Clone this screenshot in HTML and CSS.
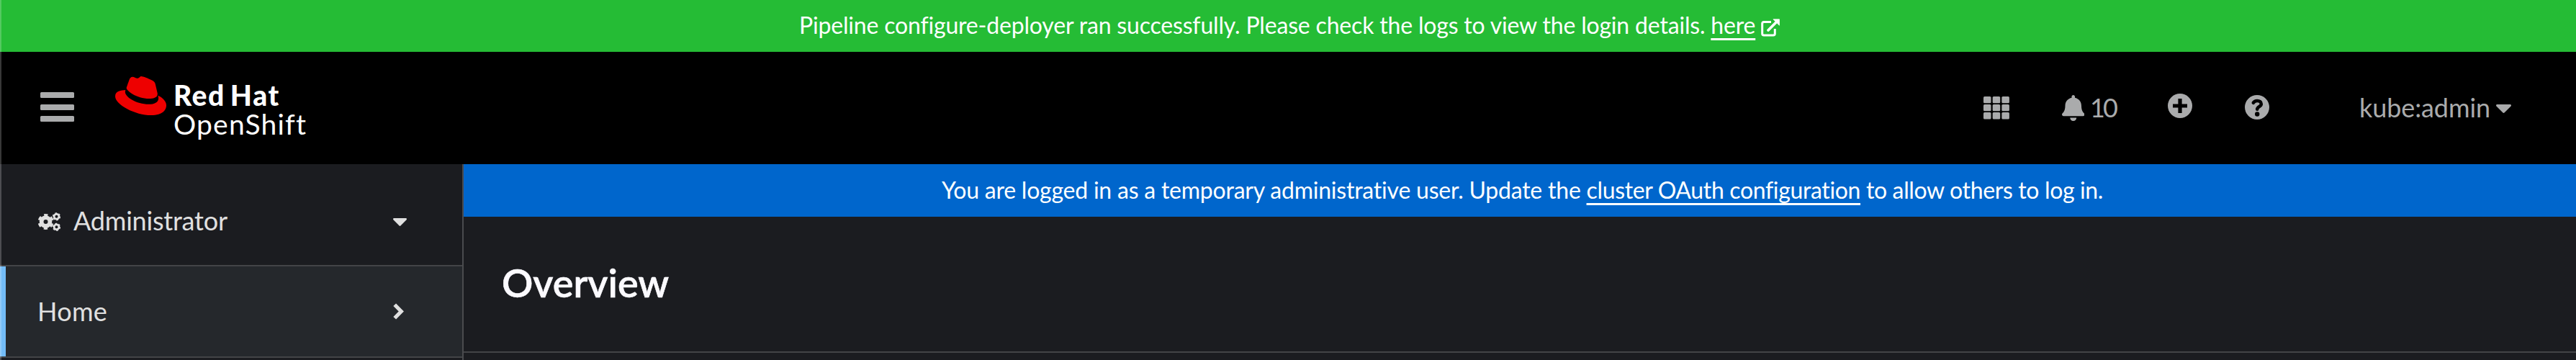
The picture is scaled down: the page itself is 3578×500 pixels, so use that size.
FILE: index.html
```html
<!DOCTYPE html>
<html lang="en">
<head>
<meta charset="utf-8">
<title>Overview · Red Hat OpenShift</title>
<link rel="stylesheet" href="styles.css">
</head>
<body>
<div class="app">
  <div class="notice notice-success">
    <span class="notice-text green-text">Pipeline configure-deployer ran successfully. Please check the logs to view the login details. <a class="link">here</a></span>
    <svg class="external" viewBox="0 0 26 25" fill="none" stroke="#fff"><path d="M14 4.500H4A2.300 2.300 0 0 0 1.700 6.800V20.700A2.300 2.300 0 0 0 4 23H17a2.300 2.300 0 0 0 2.300-2.300V14" stroke-width="3"/><path d="M10 16L20.500 5.500" stroke-width="3.800" stroke-linecap="round"/><path d="M17 .8H25.500v8.500Z" fill="#fff" stroke="#fff" stroke-width=".8" stroke-linejoin="round"/></svg>
  </div>
  <header class="masthead">
    <div class="burger"><i></i><i></i><i></i></div>
    <svg class="hat" viewBox="0 2.920 24 18.160" preserveAspectRatio="none"><path fill="#e00" d="M16.009 13.386c1.577 0 3.86-.326 3.86-2.202a1.765 1.765 0 0 0-.04-.431l-.94-4.08c-.216-.898-.406-1.305-1.982-2.093-1.223-.625-3.888-1.658-4.676-1.658-.733 0-.947.946-1.822.946-.842 0-1.467-.706-2.255-.706-.757 0-1.25.515-1.63 1.576 0 0-1.06 2.99-1.197 3.424a.81.81 0 0 0-.028.245c0 1.162 4.577 4.974 10.71 4.974m4.101-1.435c.218 1.032.218 1.14.218 1.277 0 1.765-1.984 2.745-4.593 2.745-5.895.004-11.06-3.451-11.06-5.734a2.326 2.326 0 0 1 .19-.925C2.746 9.415 0 9.794 0 12.217c0 3.969 9.405 8.861 16.851 8.861 5.71 0 7.149-2.582 7.149-4.62 0-1.605-1.387-3.425-3.887-4.512"/></svg>
    <div class="brand"><span class="brand-top">Red Hat</span><span class="brand-bottom">OpenShift</span></div>
    <div class="tools">
      <svg class="grid" viewBox="0 0 36 31.500" fill="#aaabac"><rect width="10.500" height="9.300" rx="1.500"/><rect x="12.700" width="10.500" height="9.300" rx="1.500"/><rect x="25.400" width="10.500" height="9.300" rx="1.500"/><rect y="11" width="10.500" height="9.300" rx="1.500"/><rect x="12.700" y="11" width="10.500" height="9.300" rx="1.500"/><rect x="25.400" y="11" width="10.500" height="9.300" rx="1.500"/><rect y="22.100" width="10.500" height="9.300" rx="1.500"/><rect x="12.700" y="22.100" width="10.500" height="9.300" rx="1.500"/><rect x="25.400" y="22.100" width="10.500" height="9.300" rx="1.500"/></svg>
      <svg class="bell" viewBox="0 0 448 512" fill="#aaabac"><path d="M224 512c35.32 0 63.97-28.65 63.97-64H160.03c0 35.35 28.65 64 63.97 64zm215.39-149.71c-19.32-20.76-55.47-51.99-55.47-154.29 0-77.7-54.48-139.9-127.94-155.16V32c0-17.67-14.32-32-31.98-32s-31.98 14.33-31.98 32v20.84C118.56 68.1 64.08 130.3 64.08 208c0 102.3-36.15 133.53-55.47 154.29-6 6.45-8.66 14.16-8.61 21.71.11 16.4 12.98 32 32.1 32h383.8c19.12 0 32-15.6 32.1-32 .05-7.55-2.61-15.27-8.61-21.71z"/></svg>
      <span class="count">10</span>
      <svg class="plus" viewBox="0 0 34 34"><circle cx="17" cy="17" r="17" fill="#aaabac"/><path d="M17 7v20M7 17h20" stroke="#000" stroke-width="5.200"/></svg>
      <svg class="help" viewBox="0 0 34 34"><circle cx="17" cy="17" r="17" fill="#aaabac"/><path d="M11.800 10.800C13 8.800 14.800 8 17.200 8c3.200 0 5.600 1.700 5.600 4.400 0 3.600-5.600 4-5.600 7.400" fill="none" stroke="#000" stroke-width="4.600" stroke-linecap="round"/><circle cx="17.200" cy="26.500" r="3.200"/></svg>
      <span class="user">kube:admin</span>
      <svg class="user-caret" viewBox="11 192 298 169" preserveAspectRatio="none" fill="#aaabac"><path d="M31.300 192h257.300c17.800 0 26.700 21.500 14.100 34.100L174.100 354.800c-7.800 7.800-20.500 7.800-28.300 0L17.200 226.100C4.600 213.500 13.500 192 31.300 192z"/></svg>
    </div>
  </header>
  <div class="page">
    <nav class="sidebar">
      <div class="perspective">
        <svg class="cogs" viewBox="0 0 31 26" fill="none" stroke="#e0e0e0"><circle cx="10.500" cy="13" r="5.900" stroke-width="5.800"/><circle cx="10.500" cy="13" r="9" stroke-width="4" stroke-dasharray="5 4.425" stroke-dashoffset="-2.200"/><circle cx="25.500" cy="5.800" r="3.400" stroke-width="2.800"/><circle cx="25.500" cy="5.800" r="4.900" stroke-width="1.500" stroke-dasharray="2.600 2.530"/><circle cx="25.500" cy="20.300" r="3.400" stroke-width="2.800"/><circle cx="25.500" cy="20.300" r="4.900" stroke-width="1.500" stroke-dasharray="2.600 2.530"/></svg>
        <span class="perspective-name">Administrator</span>
        <svg class="caret" viewBox="11 192 298 169" preserveAspectRatio="none" fill="#e0e0e0"><path d="M31.300 192h257.300c17.800 0 26.700 21.500 14.100 34.100L174.100 354.800c-7.800 7.800-20.500 7.800-28.300 0L17.200 226.100C4.600 213.500 13.500 192 31.300 192z"/></svg>
      </div>
      <div class="nav-item"><span class="home">Home</span>
        <svg class="chevron" viewBox="0 0 15 23" fill="none" stroke="#e0e0e0" stroke-width="5.200"><path d="M2.200 2.200L11.300 11.500 2.200 20.800"/></svg>
      </div>
    </nav>
    <main class="content">
      <div class="notice notice-info"><span class="notice-text blue-text"><span class="lead">You are logged in as a temporary administrative user. Update the </span><a class="link">cluster OAuth configuration</a> to allow others to log in.</span></div>
      <div class="page-head"><h1 class="title">Overview</h1></div>
    </main>
  </div>
  <div class="window-edge"></div>
</div>
</body>
</html>
```
FILE: styles.css
```css
* { box-sizing: border-box; }
body { margin: 0; background: #1b1c20; font-family: Lato, sans-serif; }
svg { display: block; flex: none; }
span, h1 { white-space: nowrap; }
.app { position: relative; height: 500px; overflow: hidden; }
.window-edge { position: absolute; left: 0; top: 0; width: 2px; height: 500px; background: rgba(255,255,255,.22); }
.notice { display: flex; color: #fff; font-size: 32px; line-height: 40px; font-variant-ligatures: none; }
.notice-success { height: 72px; background: #25bc35; padding: 15px 0 0 1110px; }
.green-text { width: 1329px; letter-spacing: -0.180px; }
.blue-text { letter-spacing: -0.350px; }
.lead { letter-spacing: -0.220px; }
.link { text-decoration: underline; text-decoration-thickness: 3px; text-underline-offset: 6px; }
.external { width: 26px; height: 25px; margin: 11px 0 0 7px; }
.masthead { display: flex; height: 156px; background: #000; color: #aaabac; }
.burger { display: flex; flex-direction: column; gap: 8.500px; width: 47px; margin: 56px 57px 0 56px; }
.burger i { height: 8px; border-radius: 1.500px; background: #aaabac; }
.hat { width: 71px; height: 54px; margin-top: 34px; }
.brand { display: flex; flex-direction: column; margin: 40px 0 0 10px; color: #fff; font-size: 39px; line-height: 40px; }
.brand-top { font-weight: 900; letter-spacing: 1.600px; word-spacing: -4px; }
.brand-bottom { letter-spacing: 1.200px; }
.tools { display: flex; margin-left: auto; padding-right: 90px; font-size: 36px; line-height: 44px; }
.grid { width: 36px; height: 31.500px; margin: 62px 73px 0 0; }
.bell { width: 31.500px; height: 36px; margin-top: 60px; }
.count { width: 42px; margin: 55px 66px 0 8px; letter-spacing: -3px; }
.plus { width: 34px; height: 34px; margin: 58px 73px 0 0; }
.help { width: 34px; height: 34px; margin-top: 60px; }
.user { width: 182px; margin: 55px 8px 0 125px; letter-spacing: -0.100px; }
.user-caret { width: 21px; height: 12px; margin-top: 73px; }
.page { display: flex; height: 272px; }
.sidebar { width: 644px; border-right: 2px solid #4a4b4e; color: #e0e0e0; font-size: 36px; line-height: 44px; }
.perspective { display: flex; height: 140px; padding-left: 53px; }
.cogs { width: 31px; height: 26px; margin-top: 67px; }
.perspective-name { margin: 56px 0 0 18px; letter-spacing: -0.200px; }
.caret { width: 19px; height: 11px; margin: 75px 77px 0 auto; }
.nav-item { display: flex; height: 129px; border: solid #434447; border-width: 2px 0; background: linear-gradient(90deg, #73bcf7 8px, #25282c 8px); padding-left: 52px; }
.home { margin-top: 40px; letter-spacing: 0.300px; }
.chevron { width: 15px; height: 23px; margin: 51px 81px 0 auto; }
.content { flex: 1; }
.notice-info { height: 73px; background: #06c; padding: 16px 0 0 664px; }
.page-head { height: 189px; border-bottom: 2px solid #434447; padding: 58px 0 0 53px; }
.title { margin: 0; color: #fbfaff; font-size: 54px; line-height: 68px; font-weight: 600; -webkit-text-stroke: 0.600px #fbfaff; }
```
